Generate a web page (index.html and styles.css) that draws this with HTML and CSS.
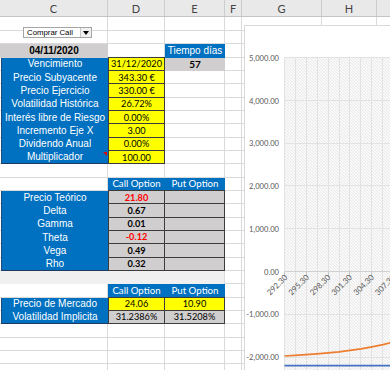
FILE: index.html
```html
<!DOCTYPE html>
<html lang="es">

<head>
  <meta charset="UTF-8">
  <meta name="viewport" content="width=device-width, initial-scale=1.0">
  <title>Opciones - Black Scholes</title>
  <link rel="stylesheet" href="styles.css">
</head>

<body>
  <!-- cabecera de columnas -->
  <div class="colheads">
    <div class="ch">C</div>
    <div class="ch">D</div>
    <div class="ch">E</div>
    <div class="ch">F</div>
    <div class="ch">G</div>
    <div class="ch">H</div>
    <div class="ch"></div>
  </div>

  <div class="sheet">
    <div class="row row-1"></div>
    <div class="row"></div>
    <div class="row">
      <div class="cell c fecha">04/11/2020</div>
      <div class="cell e head">Tiempo días</div>
    </div>
    <div class="row">
      <div class="cell c lbl">Vencimiento</div>
      <div class="cell d val top">31/12/2020</div>
      <div class="cell e dias">57</div>
    </div>
    <div class="row">
      <div class="cell c lbl">Precio Subyacente</div>
      <div class="cell d val">343.30 €</div>
    </div>
    <div class="row">
      <div class="cell c lbl">Precio Ejercicio</div>
      <div class="cell d val">330.00 €</div>
    </div>
    <div class="row">
      <div class="cell c lbl">Volatilidad Histórica</div>
      <div class="cell d val">26.72%</div>
    </div>
    <div class="row">
      <div class="cell c lbl">Interés libre de Riesgo</div>
      <div class="cell d val">0.00%</div>
    </div>
    <div class="row">
      <div class="cell c lbl">Incremento Eje X</div>
      <div class="cell d val">3.00</div>
    </div>
    <div class="row">
      <div class="cell c lbl">Dividendo Anual</div>
      <div class="cell d val">0.00%</div>
    </div>
    <div class="row">
      <div class="cell c lbl last">Multiplicador<span class="comment"></span></div>
      <div class="cell d val">100.00</div>
    </div>
    <div class="row"></div>

    <!-- griegas -->
    <div class="row">
      <div class="cell d head">Call Option</div>
      <div class="cell e head">Put Option</div>
    </div>
    <div class="row">
      <div class="cell c lbl">Precio Teórico</div>
      <div class="cell d out top red">21.80</div>
      <div class="cell e out top"></div>
    </div>
    <div class="row">
      <div class="cell c lbl">Delta</div>
      <div class="cell d out">0.67</div>
      <div class="cell e out"></div>
    </div>
    <div class="row">
      <div class="cell c lbl">Gamma</div>
      <div class="cell d out">0.01</div>
      <div class="cell e out"></div>
    </div>
    <div class="row">
      <div class="cell c lbl">Theta</div>
      <div class="cell d out red">-0.12</div>
      <div class="cell e out"></div>
    </div>
    <div class="row">
      <div class="cell c lbl">Vega</div>
      <div class="cell d out">0.49</div>
      <div class="cell e out"></div>
    </div>
    <div class="row">
      <div class="cell c lbl last">Rho</div>
      <div class="cell d out">0.32</div>
      <div class="cell e out"></div>
    </div>
    <div class="row">
      <div class="cell band"></div>
    </div>

    <!-- volatilidad implicita -->
    <div class="row">
      <div class="cell d head">Call Option</div>
      <div class="cell e head">Put Option</div>
    </div>
    <div class="row">
      <div class="cell c lbl">Precio de Mercado</div>
      <div class="cell d val top">24.06</div>
      <div class="cell e val top">10.90</div>
    </div>
    <div class="row">
      <div class="cell c lbl last">Volatilidad Implicita</div>
      <div class="cell d out plain">31.2386%</div>
      <div class="cell e out plain">31.5208%</div>
    </div>
    <div class="row"></div>
    <div class="row"></div>
    <div class="row"></div>
    <div class="row"></div>
  </div>

  <!-- control de formulario -->
  <div class="combo">
    <span class="combo-text">Comprar Call</span>
    <span class="combo-btn"></span>
  </div>

  <!-- grafico de beneficio -->
  <svg class="chart" width="146" height="345" viewBox="244 25 146 345">
    <defs>
      <pattern id="hatch" width="3" height="3" patternUnits="userSpaceOnUse">
        <rect width="3" height="3" fill="#f9f9f9" />
        <path d="M-1,2 L1,4 M0,0 L3,3 M2,-1 L4,1" stroke="#e4e4e4" stroke-width="0.8" />
      </pattern>
    </defs>
    <rect x="244.5" y="25.5" width="150" height="350" fill="#fff" stroke="#d9d9d9" />
    <rect x="284.5" y="57.5" width="110" height="320" fill="url(#hatch)" />

    <g stroke="#e2e2e2" stroke-width="1">
      <path d="M284.5,57.5 V370 M295.5,57.5 V370 M306.5,57.5 V370 M317.5,57.5 V370 M328.5,57.5 V370 M339.5,57.5 V370 M349.5,57.5 V370 M360.5,57.5 V370 M371.5,57.5 V370 M382.5,57.5 V370" />
      <path d="M284.5,57.5 H394 M284.5,100.5 H394 M284.5,143.5 H394 M284.5,185.5 H394 M284.5,228.5 H394 M284.5,314.5 H394 M284.5,357.5 H394" />
    </g>
    <path d="M284.5,271.5 H394" stroke="#d0d0d0" />
    <path d="M284.5,272 V276 M306.5,272 V276 M328.5,272 V276 M349.5,272 V276 M371.5,272 V276" stroke="#c8c8c8" />

    <g class="ylab" text-anchor="end">
      <text x="279" y="60.8">5,000.00</text>
      <text x="279" y="103.6">4,000.00</text>
      <text x="279" y="146.3">3,000.00</text>
      <text x="279" y="189.1">2,000.00</text>
      <text x="279" y="231.9">1,000.00</text>
      <text x="279" y="274.6">0.00</text>
      <text x="279" y="317.3">-1,000.00</text>
      <text x="279" y="360.1">-2,000.00</text>
    </g>

    <g class="xlab" text-anchor="end">
      <text transform="translate(288 278) rotate(-45)">292.30</text>
      <text transform="translate(309.5 278) rotate(-45)">295.30</text>
      <text transform="translate(331 278) rotate(-45)">298.30</text>
      <text transform="translate(352.5 278) rotate(-45)">301.30</text>
      <text transform="translate(374.5 278) rotate(-45)">304.30</text>
      <text transform="translate(396 278) rotate(-45)">307.30</text>
    </g>

    <polyline fill="none" stroke="#ed7d31" stroke-width="1.7"
      points="284.5,356 295,355.4 306,354.6 317,353.8 328,352.9 339,351.8 350,350.4 361,348.9 372,346.9 383,344.7 394,342" />
    <path d="M284.5,365.7 H394" stroke="#4472c4" stroke-width="1.7" />
  </svg>
</body>

</html>
```

FILE: styles.css
```css
* {
  margin: 0;
  padding: 0;
  box-sizing: border-box;
}

body {
  width: 390px;
  height: 370px;
  overflow: hidden;
  position: relative;
  background: #fff;
  font-family: 'Liberation Sans', Arial, sans-serif;
}

/* cabecera de columnas */
.colheads {
  display: flex;
  height: 17px;
  background: #e9e9e9;
  border-bottom: 1px solid #c4c4c4;
}

.ch {
  display: flex;
  align-items: center;
  justify-content: center;
  border-right: 1px solid #cdcdcd;
  color: #444;
  font-family: Lato, 'Liberation Sans', sans-serif;
  font-size: 11px;
}

.ch:nth-child(1) { width: 108px; }
.ch:nth-child(2) { width: 57px; }
.ch:nth-child(3) { width: 60px; }
.ch:nth-child(4) { width: 17px; }
.ch:nth-child(5) { width: 80px; }
.ch:nth-child(6) { width: 55px; }
.ch:nth-child(7) { flex: 1; border-right: none; }

/* hoja */
.sheet {
  background-image:
    linear-gradient(#dadada, #dadada),
    linear-gradient(#dadada, #dadada),
    linear-gradient(#dadada, #dadada),
    linear-gradient(#dadada, #dadada),
    linear-gradient(#dadada, #dadada),
    linear-gradient(#dadada, #dadada);
  background-size: 1px 100%;
  background-repeat: no-repeat;
  background-position: 107px 0, 164px 0, 224px 0, 241px 0, 321px 0, 376px 0;
}

.row {
  display: grid;
  grid-template-columns: 108px 57px 60px 17px;
  align-items: start;
  height: 13.333px;
  border-bottom: 1px solid #dadada;
}

.row-1 {
  height: 14px;
}

.cell {
  grid-row: 1;
  height: 13.333px;
  display: flex;
  align-items: center;
  justify-content: center;
  line-height: 1;
  white-space: nowrap;
  font-family: Lato, 'Liberation Sans', sans-serif;
  font-size: 9.7px;
  color: #000;
}

.c { grid-column: 1; }
.d { grid-column: 2; }
.e { grid-column: 3; }

.lbl {
  position: relative;
  margin-left: 1px;
  border-left: 1px solid #234a78;
  background: #0070c0;
  color: #fff;
  font-family: 'Liberation Sans', Arial, sans-serif;
  font-size: 10px;
}

.lbl.last {
  border-bottom: 1px solid #1f3a5e;
}

.fecha {
  background: #d0cece;
  font-family: 'Liberation Sans', Arial, sans-serif;
  font-size: 10px;
  font-weight: bold;
}

.head {
  background: #0070c0;
  color: #fff;
}

.fecha + .head {
  font-family: 'Liberation Sans', Arial, sans-serif;
  font-size: 10px;
}

.dias {
  background: #d0cece;
  font-weight: bold;
  font-size: 10px;
}

.val,
.out {
  border-right: 1px solid #3c3c3c;
  border-bottom: 1px solid #3c3c3c;
  font-size: 9.2px;
}

.d.val,
.d.out {
  border-left: 1px solid #3c3c3c;
}

.val {
  background: #ffff00;
}

.out {
  background: #d0cece;
  font-weight: bold;
}

.out.plain {
  font-weight: normal;
}

.top {
  margin-top: -1px;
  height: 14.333px;
  border-top: 1px solid #3c3c3c;
}

.red {
  color: #ff0000;
}

.band {
  grid-column: 1 / 4;
  width: 224px;
  background: #f0f0f0;
}

/* indicador de comentario */
.comment {
  position: absolute;
  top: 1px;
  right: 1px;
  border-top: 4px solid #e00000;
  border-left: 4px solid transparent;
}

/* lista desplegable */
.combo {
  position: absolute;
  left: 23px;
  top: 27px;
  width: 69px;
  height: 11px;
  display: flex;
  align-items: center;
  background: #fff;
  border: 1px solid #a5a5a5;
}

.combo-text {
  flex: 1;
  padding-left: 3px;
  font-size: 7.8px;
  color: #000;
}

.combo-btn {
  width: 11px;
  height: 9px;
  display: flex;
  align-items: center;
  justify-content: center;
  background: #f0f0f0;
  border-left: 1px solid #c8c8c8;
}

.combo-btn::after {
  content: '';
  border-top: 4px solid #000;
  border-left: 3px solid transparent;
  border-right: 3px solid transparent;
}

/* grafico */
.chart {
  position: absolute;
  left: 244px;
  top: 25px;
}

.ylab text,
.xlab text {
  font-family: Lato, 'Liberation Sans', sans-serif;
  font-size: 7.6px;
  fill: #595959;
}

.xlab text {
  font-size: 8px;
}
```
